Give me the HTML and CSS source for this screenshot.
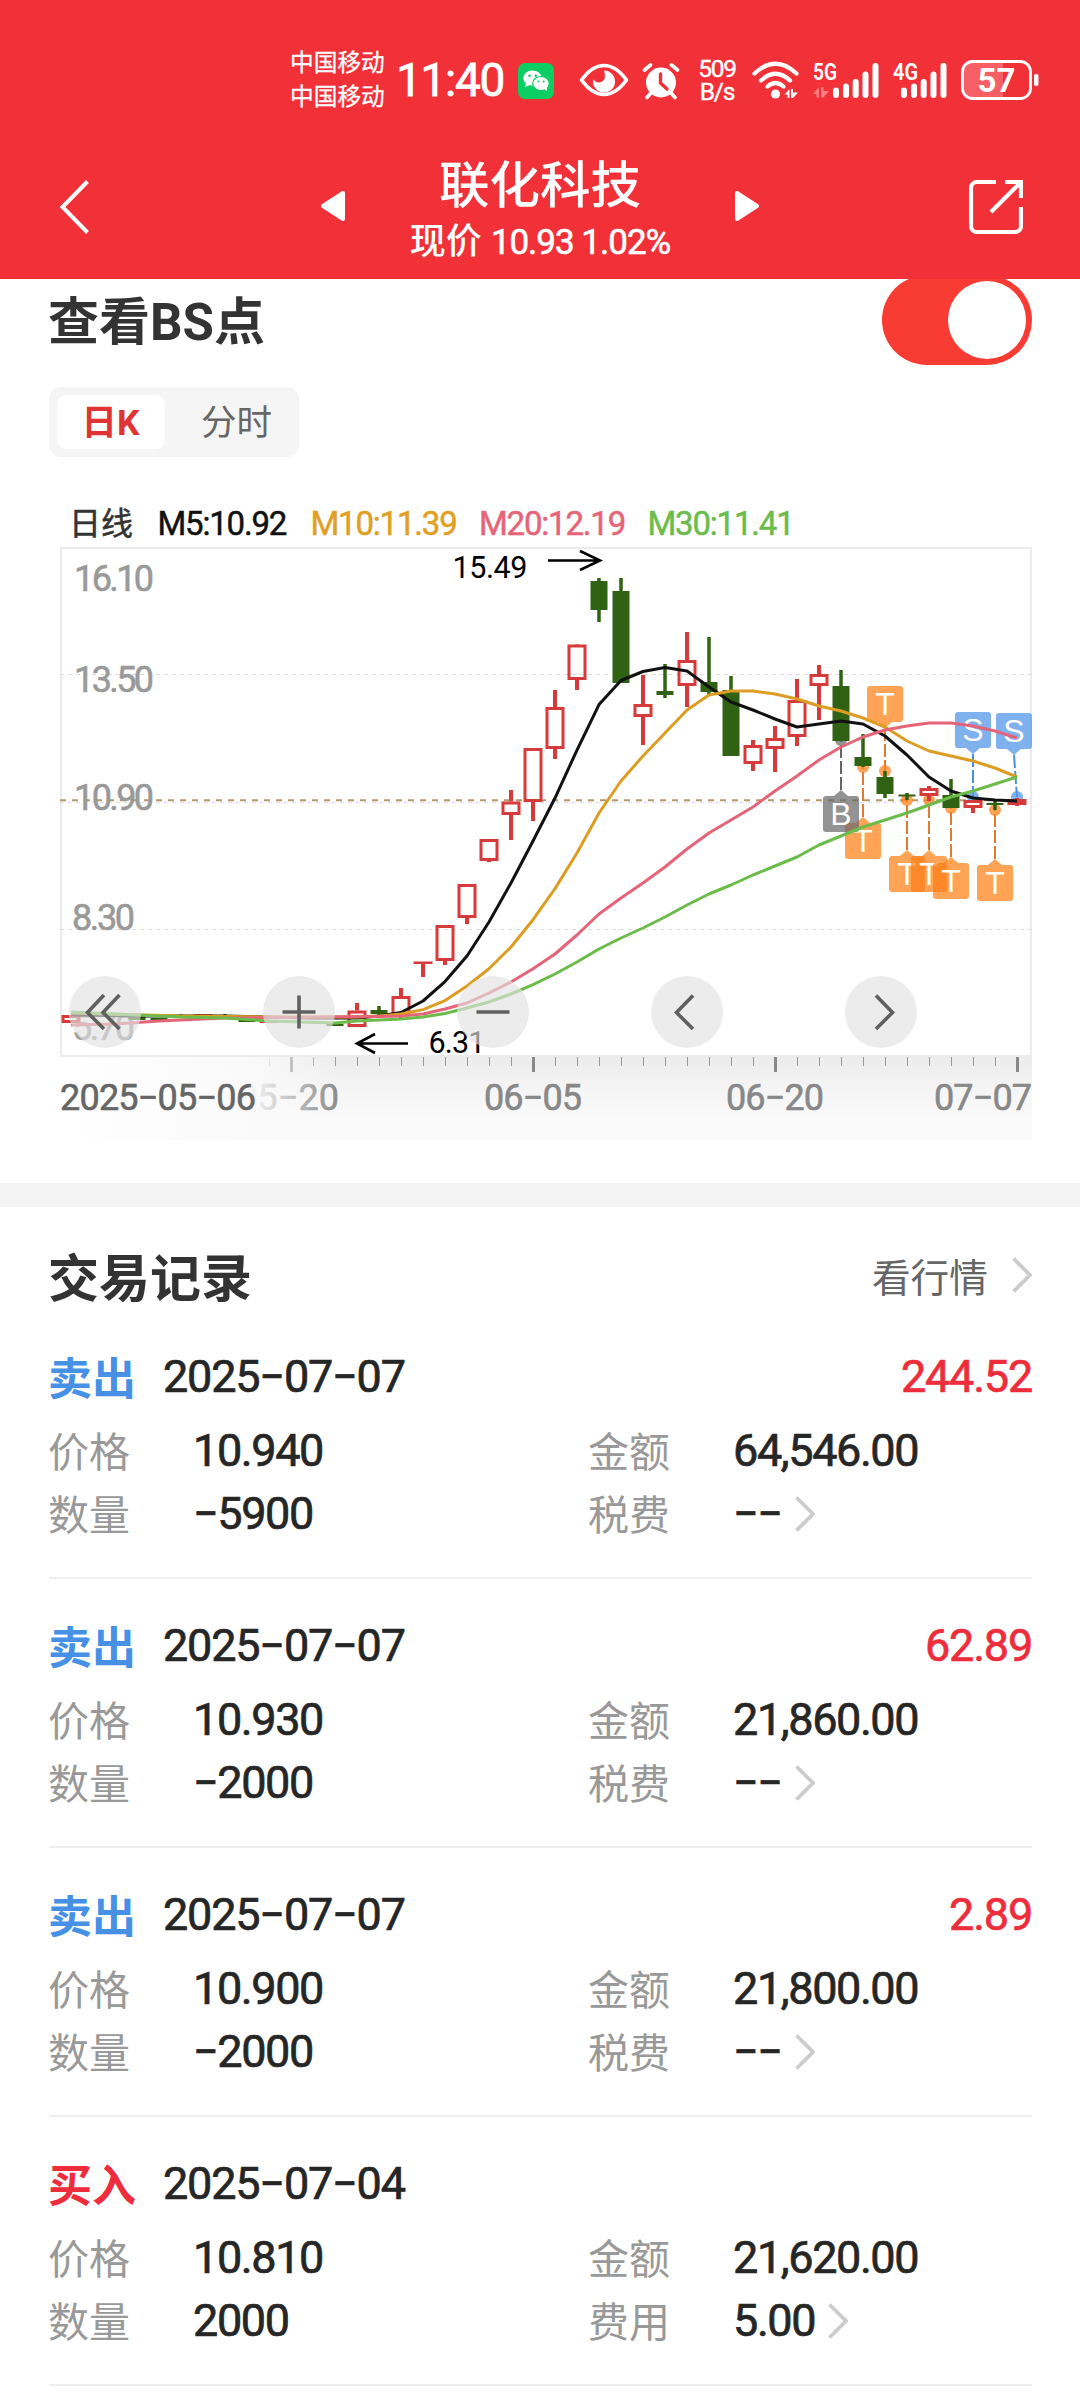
FILE: index.html
```html
<!DOCTYPE html>
<html lang="zh-CN">
<head>
<meta charset="utf-8">
<title>联化科技</title>
<link rel="stylesheet" href="styles.css">
</head>
<body>
<header class="top">
  <div class="status">
    <div class="carriers"><span>中国移动</span><span>中国移动</span></div>
    <span class="clock">11:40</span>
    <svg class="wechat" viewBox="0 0 36 36" width="36" height="36">
      <rect width="36" height="36" rx="7" fill="#0bcf63"/>
      <ellipse cx="14.500" cy="15" rx="9.300" ry="7.500" fill="#fff"/><path d="M8 20l-1 4 5-2z" fill="#fff"/>
      <ellipse cx="23" cy="20.500" rx="8.300" ry="7" fill="#fff" stroke="#0bcf63" stroke-width="1.200"/><path d="M26 26l3 2v-4z" fill="#fff"/>
      <g fill="#0bcf63"><circle cx="11.500" cy="12.700" r="1.200"/><circle cx="17.800" cy="12.700" r="1.200"/><circle cx="20.300" cy="18.500" r="1"/><circle cx="25.700" cy="18.500" r="1"/></g>
    </svg>
    <svg class="eye" viewBox="0 0 50 34" width="50" height="34">
      <path d="M2.500 17Q13 2.500 25 2.500T47.500 17Q37 31.500 25 31.500T2.500 17Z" fill="none" stroke="#fff" stroke-width="3.600" stroke-linejoin="round"/>
      <path d="M25 7.500a11 11 0 1 1-10.800 9q3.500 4 7.800 2.500t3.900-6.500T25 7.500Z" fill="#fff"/>
    </svg>
    <svg class="alarm" viewBox="0 0 40 38" width="40" height="38">
      <circle cx="20" cy="20.500" r="15" fill="#fff"/>
      <path d="M3.500 8l6-5M36.500 8l-6-5M10 31l-4 4.500M30 31l4 4.500" stroke="#fff" stroke-width="3.600" stroke-linecap="round"/>
      <path d="M19.500 12v9l6.500 6" fill="none" stroke="#f13038" stroke-width="3.400" stroke-linecap="round"/>
    </svg>
    <div class="speed"><span>509</span><span>B/s</span></div>
    <svg class="wifi" viewBox="0 0 47 38" width="47" height="38">
      <g fill="none" stroke="#fff" stroke-width="4.200" stroke-linecap="round"><path d="M2.500 12.500Q23.500-7 44.500 12.500"/><path d="M9 19.500Q23.500 6 38 19.500"/><path d="M15.500 25.500Q23.500 18.500 31.500 25.500"/></g>
      <circle cx="23.500" cy="33" r="4.600" fill="#fff"/>
      <path d="M32.500 33.500l5-5.500v9h-2v-3.500zM39 28h2v3.500h5l-5 5.500h-2z" fill="#fff"/>
    </svg>
    <svg class="signal" viewBox="0 0 66 38" width="66" height="38">
      <text x="0" y="18.500" class="net" textLength="24" lengthAdjust="spacingAndGlyphs">5G</text>
      <path d="M0 33l6-7v10.500h-2.500v-3.500zM8 26h2.500v4h5.500l-5.500 6.500h-2.500z" fill="#ff7b80"/>
      <path d="M23 29.500v4.500M33 25.500v8.500M42.700 21v13M52.500 13.500v20.500M62.500 5v29" stroke="#fff" stroke-width="6" stroke-linecap="round"/>
    </svg>
    <svg class="signal second" viewBox="0 0 54 38" width="54" height="38">
      <text x="0" y="18.500" class="net" textLength="25" lengthAdjust="spacingAndGlyphs">4G</text>
      <path d="M11 29.500v4.500M21 25.500v8.500M30.700 21v13M40.500 13.500v20.500M50.500 5v29" stroke="#fff" stroke-width="6" stroke-linecap="round"/>
    </svg>
    <svg class="battery" viewBox="0 0 78 40" width="78" height="40">
      <path d="M11 2h31v36H11a9 9 0 0 1-9-9V11a9 9 0 0 1 9-9z" fill="#f55f65"/>
      <rect x="1.500" y="1.500" width="68" height="37" rx="10" fill="none" stroke="#fff" stroke-width="2.800"/>
      <rect x="73" y="14" width="4.500" height="12" rx="2" fill="#fff"/>
      <text x="35.500" y="31.500" text-anchor="middle" class="level">57</text>
    </svg>
  </div>
  <nav class="nav">
    <svg class="back" viewBox="0 0 32 54" width="32" height="54"><path d="M28.500 1.500L3.500 27l25 25.500" fill="none" stroke="#fff" stroke-width="4"/></svg>
    <svg class="prev" viewBox="0 0 24 30" width="24" height="30"><path d="M22 2v26L2 15z" fill="#fff" stroke="#fff" stroke-width="4" stroke-linejoin="round"/></svg>
    <div class="titles"><h1>联化科技</h1><p>现价 <b>10.93 1.02%</b></p></div>
    <svg class="next" viewBox="0 0 24 30" width="24" height="30"><path d="M2 2v26l20-13z" fill="#fff" stroke="#fff" stroke-width="4" stroke-linejoin="round"/></svg>
    <svg class="share" viewBox="0 0 54 54" width="54" height="54"><path d="M27 2H8a6 6 0 0 0-6 6v38a6 6 0 0 0 6 6h38a6 6 0 0 0 6-6V27M36 2h16v16M52 2L22 32" fill="none" stroke="#fff" stroke-width="4.200"/></svg>
  </nav>
</header>

<section class="bs">
  <div class="bs-head"><h2>查看BS点</h2><div class="toggle"><i></i></div></div>
  <div class="tabs"><span class="tab on">日K</span><span class="tab">分时</span></div>
  <div class="legend"><span class="name">日线</span><span class="m5">M5:10.92</span><span class="m10">M10:11.39</span><span class="m20">M20:12.19</span><span class="m30">M30:11.41</span></div>
  <div class="chart">
    <svg id="chart" viewBox="60 546 972 594" width="972" height="594">
      <defs>
        <linearGradient id="ax" x1="0" y1="0" x2="0" y2="1"><stop offset="0" stop-color="#ececec"/><stop offset=".35" stop-color="#f4f4f4"/><stop offset=".75" stop-color="#fafafa"/><stop offset="1" stop-color="#fafafa"/></linearGradient>
        <linearGradient id="fade" x1="0" y1="0" x2="1" y2="0"><stop offset="0" stop-color="#fff"/><stop offset=".68" stop-color="#fafafa" stop-opacity=".95"/><stop offset="1" stop-color="#fafafa" stop-opacity="0"/></linearGradient>
      </defs>
      <rect x="60" y="1057" width="972" height="83" fill="url(#ax)"/>
      <g id="ticks"></g>
      <text class="date" x="237" y="1110" textLength="102">05−20</text>
      <rect x="60" y="1057" width="280" height="83" fill="url(#fade)"/>
      <text class="date first" x="60" y="1110" textLength="196">2025−05−06</text>
      <text class="date" x="484" y="1110" textLength="98">06−05</text>
      <text class="date" x="726" y="1110" textLength="98">06−20</text>
      <text class="date" x="934" y="1110" textLength="98">07−07</text>
      <rect x="61" y="548" width="970" height="508" fill="none" stroke="#ececec" stroke-width="2"/>
      <path d="M60 674.500H1032M60 929.500H1032" stroke="#dcdcdc" stroke-width="1" stroke-dasharray="4 4"/>
      <path d="M60 802.500H1032" stroke="#e6e6e6" stroke-width="1.500" stroke-dasharray="4 4"/>
      <path d="M60 800.300H1032" stroke="#b5996c" stroke-width="2" stroke-dasharray="6 6"/>
      <g class="price"><text x="74" y="590.500" textLength="80">16.10</text><text x="74" y="692" textLength="80">13.50</text><text x="74" y="810" textLength="80">10.90</text><text x="72" y="929.500" textLength="63">8.30</text><text x="72" y="1039.500" textLength="63">5.70</text></g>
      <g id="markers"></g>
      <g id="candles"></g>
      <g id="lines"></g>
      <g class="peak"><text x="452.500" y="577.500" textLength="75">15.49</text><text x="428.500" y="1053" textLength="57">6.31</text></g>
      <path d="M548 560.500H599M580 551l20 9.500-20 9.500M408 1043.500H358M375 1034l-18 9.500 18 9.500" fill="none" stroke="#000" stroke-width="2.600"/>
    </svg>
    <div class="controls">
      <button><svg viewBox="0 0 72 72"><path d="M35 19L18.500 36.500 35 53M50.500 19L34 36.500 50.500 53"/></svg></button>
      <button><svg viewBox="0 0 72 72"><path d="M19.500 36h33M36 19.500v33"/></svg></button>
      <button><svg viewBox="0 0 72 72"><path d="M19.500 36h33"/></svg></button>
      <button><svg viewBox="0 0 72 72"><path d="M42 19.500L25.500 36.500 42 53"/></svg></button>
      <button><svg viewBox="0 0 72 72"><path d="M31 19.500L47.500 36.500 31 53"/></svg></button>
    </div>
  </div>
</section>

<section class="records">
  <div class="rec-head"><h2>交易记录</h2><a>看行情<svg class="chev" viewBox="0 0 20 36"><path d="M1.500 1.500L18 18 1.500 34.500"/></svg></a></div>
  <div id="list"></div>
</section>
<script src="app.js"></script>
</body>
</html>
```
FILE: styles.css
```css
* { box-sizing: border-box; }
body { margin: 0; width: 1080px; height: 2400px; overflow: hidden; background: #fff; color: #262626; font-family: Roboto, "Noto Sans CJK SC", sans-serif; }
h1, h2, p { margin: 0; }
svg { display: block; flex: none; }
.top { position: relative; z-index: 1; height: 279px; background: #f13038; color: #fff; }
.status { display: flex; height: 130px; padding: 50px 0 0 290px; align-items: flex-start; }
.carriers { display: flex; flex-direction: column; width: 106px; margin-top: -4px; font-size: 23.700px; line-height: 34px; white-space: nowrap; -webkit-text-stroke: .3px #fff; }
.clock { width: 112px; margin-top: -2px; font-size: 46px; line-height: 64px; font-weight: 400; letter-spacing: -1.300px; -webkit-text-stroke: .8px #fff; }
.wechat { margin: 13px 0 0 10px; }
.eye { margin: 13px 0 0 25px; }
.alarm { margin: 12px 0 0 12px; }
.speed { display: flex; flex-direction: column; width: 40px; margin: 7px 0 0 16px; font-size: 24.500px; line-height: 23px; letter-spacing: -1.200px; text-align: center; -webkit-text-stroke: .4px #fff; }
.wifi { margin: 11px 0 0 15px; }
.signal { margin: 11px 0 0 14px; overflow: visible; }
.second { margin-left: 14px; }
.net { font-size: 24px; font-weight: 600; fill: #fff; }
.battery { margin: 10px 0 0 14px; }
.level { font-size: 33px; font-weight: 700; fill: #fff; }
.nav { display: flex; height: 149px; padding-left: 59px; align-items: flex-start; }
.back { margin-top: 50px; }
.prev { margin: 61px 0 0 230px; }
.titles { width: 390px; text-align: center; padding-top: 23px; }
.titles h1 { font-size: 50.500px; line-height: 66px; font-weight: 500; }
.titles p { font-size: 36px; line-height: 46px; font-weight: 500; }
.titles b { font-weight: 400; font-size: 35px; letter-spacing: -1px; -webkit-text-stroke: .6px #fff; }
.next { margin: 61px 0 0 0; }
.share { margin: 50px 0 0 210px; }
.bs { height: 904px; }
.bs-head { display: flex; justify-content: space-between; height: 86px; padding: 0 48px 0 48px; }
.bs h2, .records h2 { font-size: 51px; line-height: 88px; font-weight: 700; color: #333; }
.toggle { width: 150px; height: 90px; margin-top: -4px; padding: 6px; border-radius: 45px; background: #f93c33; display: flex; justify-content: flex-end; }
.toggle i { width: 78px; height: 78px; border-radius: 50%; background: #fff; }
.tabs { display: flex; width: 250px; height: 70px; margin: 22px 0 0 49px; padding: 8px; border-radius: 12px; background: #f5f5f5; font-size: 35.500px; line-height: 57px; color: #666; }
.tab { flex: 1; padding-left: 17px; text-align: center; }
.tab.on { flex: none; width: 108px; height: 54px; padding: 0 1px 0 0; border-radius: 9px; background: #fff; color: #e03434; font-weight: 700; }
.legend { display: flex; height: 89px; padding: 44px 0 0 69px; font-size: 33px; line-height: 46px; letter-spacing: -1.200px; -webkit-text-stroke: .5px currentColor; white-space: nowrap; }
.legend span { width: 168.500px; }
.legend .name { width: 88.500px; font-size: 32px; letter-spacing: 0; font-weight: 400; color: #333; }
.legend .m5 { width: 153px; color: #111; }
.m10 { color: #e0a023; }
.m20 { color: #e66478; }
.m30 { color: #6cbc4b; }
.chart { position: relative; width: 972px; margin-left: 60px; }
.price text { font-size: 36px; fill: #999; stroke: #999; stroke-width: .6px; }
.date { font-size: 36px; fill: #888; stroke: #888; stroke-width: .6px; }
.date.first { fill: #666; stroke: #666; }
.peak text { font-size: 30.500px; fill: #000; }
.mark { font: 32px "Liberation Sans", sans-serif; fill: #fff; text-anchor: middle; }
.controls { position: absolute; left: 9px; top: 430px; display: flex; gap: 122px; }
.controls button { width: 72px; height: 72px; padding: 0; border: 0; border-radius: 50%; background: rgba(226,226,226,.65); }
.controls path { fill: none; stroke: #606060; stroke-width: 3.600; }
.records { border-top: 24px solid #f4f4f4; }
.rec-head { display: flex; justify-content: space-between; height: 126px; padding: 29px 48px 0 48px; }
.rec-head a { display: flex; align-items: center; height: 80px; margin-top: -1px; font-size: 38.700px; color: #666; }
.rec-head .chev { margin-left: 24px; }
.chev { width: 20px; height: 36px; }
.chev path { fill: none; stroke: #ccc; stroke-width: 3.800; }
.record { height: 246px; margin: 0 48px 23px 49px; border-bottom: 2px solid #efefef; font-size: 45px; letter-spacing: -1.200px; -webkit-text-stroke: .7px currentColor; }
.line1 { display: flex; align-items: center; height: 86px; }
.side { width: 114px; margin-left: -1px; margin-right: 1px; font-size: 44px; font-weight: 700; letter-spacing: 0; -webkit-text-stroke: 0; }
.sell { color: #4690e6; }
.buy { color: #ee2d3c; }
.amount { margin-left: auto; color: #ee2d3c; }
.grid { display: grid; grid-template-columns: 144px 396px 144px 1fr; grid-auto-rows: 63px; align-items: center; letter-spacing: -1.400px; }
.grid span { margin: -4px 0 0 -1px; font-size: 41px; font-weight: 400; letter-spacing: 0; color: #999; -webkit-text-stroke: 0; }
.grid div { display: flex; align-items: center; }
.grid .chev { margin-left: 13px; }
```
FILE: app.js
```js
const up = '#d63a3a', down = '#2f6212';
// x, open/close box top, bottom, wick top, wick bottom, rising
const candles = [
  [71,1015,1023,1015,1023,1],[137,1017,1020,1017,1020,0],[159,1018,1021,1018,1021,0],[181,1015,1018,1014,1018,0],[203,1014,1016,1014,1016,2],[225,1016,1018,1014,1018,0],
  [247,1020,1022,1020,1022,0],[269,1021,1023,1021,1023,2],[335,1024,1026,1022,1026,0],[357,1010.5,1027,1003,1027,1],[379,1010,1014,1006,1016,0],
  [401,996,1016,988,1020,1],[423,961.5,964,962,977,2],[445,925,961,925,965,1],[467,884,918,884,924,1],[489,839,861,839,862,1],[511,801.5,815,790,840,1],
  [533,748,802,748,821,1],[555,707,749,690,759,1],[577,644.5,680,644,690,1],[599,581,610,578,622,0],[621,591,683,578,683,0],[643,704,717,675,745,1],
  [665,691,695,664,698,0],[687,660,686,632,707,1],[709,682,692,637,695,0],[731,690,756,676,756,0],[753,745,764,740,771,1],[775,738,749,726,772,1],
  [797,700,737,679,746,1],[819,674,686,665,720,1],[841,686,741,670,741,0],[863,757,766,734,767,0],[885,777,794,771,798,0],[907,794.5,796.5,793,800,0],
  [929,788,796,786,801,1],[951,795,808,779,808,0],[973,800,808,800,813,1],[995,803,805,801,810,0],[1017,799,805,798,806,2]];
let c = '';
for (const [x, t, b, h, l, k] of candles) {
  if (k === 1) c += `<path d="M${x} ${h}V${t}M${x} ${b}V${l}" stroke="${up}" stroke-width="4"/><rect x="${x - 8}" y="${t + 1.5}" width="16" height="${b - t - 3}" fill="none" stroke="${up}" stroke-width="3"/>`;
  else c += `<path d="M${x} ${h}V${l}" stroke="${k ? up : down}" stroke-width="${k ? 4 : 3.5}"/><rect x="${x - (k ? 9.5 : 8.5)}" y="${t}" width="${k ? 19 : 17}" height="${b - t}" fill="${k ? up : down}"/>`;
}
document.getElementById('candles').innerHTML = c;

const X = n => 1017 - 22 * n;
const series = {
  '#111': [[71,1015],[137,1016],[225,1016],[313,1018],[357,1018]].concat(tail([1016,1012.5,1001,981.6,956,922,883,841,798,750,704.6,680.5,671.5,667.6,671,687,702,710,719,727,724,721,724,736,755,777,791,798,800,801])),
  '#dc9d22': [[71,1013],[181,1016],[269,1017],[357,1017]].concat(tail([1016,1014,1009.6,1000.6,986,968.7,947,919.7,888.6,853,813,781,756,733,710,695,691,691,694,699,706,711,718,727,741,751,756,761,768,777])),
  '#e66478': [[71,1025],[115,1024],[159,1021],[225,1018],[313,1017]].concat(tail([1016.5,1016,1014,1009,1003,993,982,968.7,954,935,914,898,883,867,849,833,820,807,791,776,760,747,737,730,726,723,723,726,731,738])),
  '#6cbc4b': [[71,1012],[115,1014],[181,1017],[225,1018],[269,1021],[335,1023],[357,1021]].concat(tail([1020,1019,1017,1013.5,1008,1002,994,984.7,974,962,949,938,928,917,905,894,885,875,866,857,845,836,827,820,813,805,797,791,784,777]))
};
function tail(v) { return v.map((y, i) => [X(v.length - 1 - i), y]); }
document.getElementById('lines').innerHTML = Object.entries(series).map(([s, p]) => `<polyline points="${p.join(' ')}" fill="none" stroke="${s}" stroke-width="3" stroke-linejoin="round"/>`).join('');

// letter, box centre x, box top, dot x, dot y, fill, stem
const O = ['#ff8017', '#de7c32'], S = ['#4f94ea', '#4a90dc'], G = ['#6a6a6a', '#666'];
const marks = [['T',863,823,863,767,O],['B',841,796,841,740,G],['T',885,686,885,771,O],['T',907,856,907,800,O],['T',929,856,929,800,O],['T',951,863,951,808,O],['T',995,865,995,810,O],['S',973,712,973,797,S],['S',1014,713,1017,797,S]];
document.getElementById('markers').innerHTML = marks.map(([ch, x, y, dx, dy, [f, s]]) => {
  const above = y < dy, edge = above ? y + 36 : y, tip = above ? edge + 6 : edge - 6;
  return `<path d="M${x} ${tip}L${dx} ${dy}" stroke="${s}" stroke-width="2" stroke-dasharray="13 3"/><g fill="${f}" opacity=".72"><circle cx="${dx}" cy="${dy}" r="6"/><rect x="${x - 18}" y="${y}" width="36" height="36" rx="3"/><path d="M${x - 7} ${edge}L${x} ${tip}l7 ${edge - tip}z"/></g><text class="mark" x="${x}" y="${y + 29}">${ch}</text>`;
}).join('');

let t = '';
for (let x = 269; x <= 1018; x += 22) t += (x - 291) % 242 === 0 ? `<path d="M${x + .5} 1057v15" stroke="#888" stroke-width="3"/>` : `<path d="M${x + .5} 1057v9" stroke="#999" stroke-width="1"/>`;
document.getElementById('ticks').innerHTML = t;

const chev = '<svg class="chev" viewBox="0 0 20 36"><path d="M1.500 1.500L18 18 1.500 34.500"/></svg>';
const rows = [
  ['卖出','2025−07−07','244.52','10.940','64,546.00','−5900','税费','−−'],
  ['卖出','2025−07−07','62.89','10.930','21,860.00','−2000','税费','−−'],
  ['卖出','2025−07−07','2.89','10.900','21,800.00','−2000','税费','−−'],
  ['买入','2025−07−04','','10.810','21,620.00','2000','费用','5.00']];
document.getElementById('list').innerHTML = rows.map(([side, date, amt, price, total, qty, feeName, fee]) => `<article class="record"><div class="line1"><span class="side ${side === '卖出' ? 'sell' : 'buy'}">${side}</span><span>${date}</span><span class="amount">${amt}</span></div><div class="grid"><span>价格</span><div>${price}</div><span>金额</span><div>${total}</div><span>数量</span><div>${qty}</div><span>${feeName}</span><div>${fee}${chev}</div></div></article>`).join('');
```
